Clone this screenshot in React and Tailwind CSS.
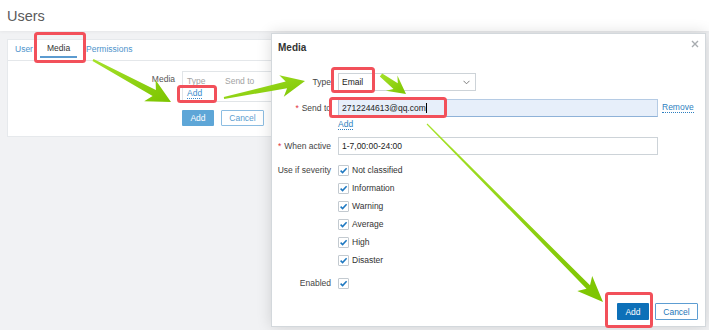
import React from 'react'

const font = "font-['Liberation_Sans',Arial,sans-serif]"

// tapered arrow polygon from tail to tip
function arrow(x1, y1, x2, y2, w0, w1, hl, hw) {
  const dx = x2 - x1
  const dy = y2 - y1
  const len = Math.hypot(dx, dy)
  const ux = dx / len
  const uy = dy / len
  const px = -uy
  const py = ux
  const bx = x2 - ux * hl
  const by = y2 - uy * hl
  const sx = bx + ux * 3
  const sy = by + uy * 3
  const pts = [
    [x1 + (px * w0) / 2, y1 + (py * w0) / 2],
    [sx + (px * w1) / 2, sy + (py * w1) / 2],
    [bx - ux * 2 + (px * hw) / 2, by - uy * 2 + (py * hw) / 2],
    [x2, y2],
    [bx - ux * 2 - (px * hw) / 2, by - uy * 2 - (py * hw) / 2],
    [sx - (px * w1) / 2, sy - (py * w1) / 2],
    [x1 - (px * w0) / 2, y1 - (py * w0) / 2],
  ]
  return pts.map(p => p.map(v => v.toFixed(1)).join(',')).join(' ')
}

const redBoxes = [
  [34, 32, 86, 63],
  [177, 85, 217, 103],
  [331, 67, 375, 93],
  [329, 97, 447, 118],
  [605, 292, 653, 328],
]

const arrows = [
  [93, 60, 171, 102, 2, 7, 22, 24],
  [224, 98, 305, 81, 2, 7, 22, 22],
  [381, 75, 406, 94, 4, 7, 16, 19],
  [427, 124, 603, 302, 1, 5, 24, 21],
]

function Annotations() {
  return (
    <svg className="absolute inset-0 pointer-events-none" width="709" height="330">
      <defs>
        <linearGradient id="lime" x1="0" y1="0" x2="1" y2="1">
          <stop offset="0" stopColor="#a6e22a" />
          <stop offset="1" stopColor="#7cc400" />
        </linearGradient>
      </defs>
      {redBoxes.map(([a, b, c, d], i) => (
        <rect key={i} x={a + 1.5} y={b + 1.5} width={c - a - 3} height={d - b - 3} rx="2" fill="none" stroke="#f2505a" strokeWidth="3" />
      ))}
      {arrows.map((a, i) => (
        <polygon key={i} points={arrow(...a)} fill="url(#lime)" />
      ))}
    </svg>
  )
}

function Check() {
  return (
    <span className="w-[11px] h-[11px] border border-[#c3cad0] rounded-[1px] bg-white flex items-center justify-center shrink-0">
      <svg width="9" height="9" viewBox="0 0 9 9">
        <path d="M1.6 4.6 L3.6 6.6 L7.6 2.2" fill="none" stroke="#1d78c1" strokeWidth="1.5" />
      </svg>
    </span>
  )
}

function Row({ label, req, className = '', children }) {
  return (
    <div className={`flex gap-[7px] ${className}`}>
      <div className="w-[53px] h-[18px] flex items-center justify-end whitespace-nowrap text-[#444]">
        {req && <span className="text-[#e2343c] mr-[3px]">*</span>}
        {label}
      </div>
      <div className="flex-1">{children}</div>
    </div>
  )
}

const severities = ['Not classified', 'Information', 'Warning', 'Average', 'High', 'Disaster']

export default function App() {
  return (
    <div className={`relative w-[709px] h-[330px] overflow-hidden bg-[#f1f2f4] ${font} text-[8.5px] leading-[10px]`}>
      {/* Page header */}
      <div className="h-[31px] bg-white flex items-center px-[7px] shadow-[0_1px_3px_rgba(0,0,0,0.05)]">
        <span className="text-[14.5px] leading-[16px] text-[#5b5b5b]">Users</span>
      </div>

      {/* User form card behind the dialog */}
      <div className="mx-[7px] mt-[8px] h-[98px] bg-white border border-[#e6e9ec]">
        <div className="h-[21px] border-b border-[#e4e7ea] flex items-start text-[8.5px]">
          <span className="px-[7px] h-[18px] flex items-center text-[#4d93cb]">User</span>
          <span className="px-[7px] h-[18px] flex items-center text-[#333] border-b-2 border-[#5b9bd0]">Media</span>
          <span className="ml-[2px] px-[7px] h-[18px] flex items-center text-[#4d93cb]">Permissions</span>
        </div>
        <div className="flex gap-[7px] mt-[10px]">
          <div className="w-[167px] text-right text-[#555] pt-[3px]">Media</div>
          <div className="w-[320px] h-[31px] border border-[#e1e5e8] px-[4px] pt-[4px]">
            <div className="flex text-[#a3a3a3]">
              <span className="w-[38px]">Type</span>
              <span>Send to</span>
            </div>
            <span className="inline-block mt-[3px] text-[#3a8bcb] border-b border-dotted border-[#3a8bcb] leading-[9px]">Add</span>
          </div>
        </div>
        <div className="flex gap-[7px] ml-[174px] mt-[8px]">
          <span className="w-[32px] h-[16px] bg-[#5ea6d7] text-white flex items-center justify-center rounded-[1px]">Add</span>
          <span className="w-[43px] h-[16px] border border-[#8cbde2] text-[#5c9dcf] bg-white flex items-center justify-center rounded-[1px]">Cancel</span>
        </div>
      </div>

      {/* Media dialog */}
      <div className="absolute left-[271px] top-[33px] w-[435px] h-[294px] bg-white border border-[#d3d8dc] shadow-[0_0_14px_rgba(0,0,0,0.14)] flex flex-col">
        <div className="pt-[8px] pl-[6px] h-[20px] text-[10px] leading-[12px] font-bold text-[#333]">Media</div>
        <svg className="absolute right-[6px] top-[6px]" width="8" height="8" viewBox="0 0 8 8">
          <path d="M1 1 L7 7 M7 1 L1 7" stroke="#a8acb0" strokeWidth="1.4" />
        </svg>

        <div className="px-[6px] mt-[19px]">
          <Row label="Type">
            <div className="w-[138px] h-[18px] border border-[#cdd3d8] flex items-center justify-between pl-[3px] pr-[5px] text-[#222]">
              <span>Email</span>
              <svg width="7" height="5" viewBox="0 0 7 5">
                <path d="M0.5 0.8 L3.5 3.8 L6.5 0.8" fill="none" stroke="#6f6f6f" strokeWidth="0.9" />
              </svg>
            </div>
          </Row>

          <Row label="Send to" req className="mt-[8px]">
            <div className="flex items-center">
              <div className="w-[320px] h-[18px] bg-[#e7effa] border border-[#b5cbe4] border-b-[#8fb2d8] flex items-center pl-[3px] text-[#1d1d1d]">
                <span>2712244613@qq.com</span>
                <span className="w-[1px] h-[10px] bg-black" />
              </div>
              <span className="ml-[4px] text-[#2d7fc0] border-b border-dotted border-[#2d7fc0] leading-[9px]">Remove</span>
            </div>
          </Row>

          <div className="flex gap-[7px] h-[16px] items-center">
            <div className="w-[53px]" />
            <span className="text-[#2d7fc0] border-b border-dotted border-[#2d7fc0] leading-[9px]">Add</span>
          </div>

          <Row label="When active" req className="mt-[4px]">
            <div className="w-[320px] h-[18px] border border-[#cdd3d8] flex items-center pl-[3px] text-[#222]">1-7,00:00-24:00</div>
          </Row>

          <Row label="Use if severity" className="mt-[6px]">
            <div className="flex flex-col">
              {severities.map(s => (
                <div key={s} className="h-[18px] flex items-center gap-[3px] text-[#333]">
                  <Check />
                  <span>{s}</span>
                </div>
              ))}
            </div>
          </Row>

          <Row label="Enabled" className="mt-[5px]">
            <div className="h-[18px] flex items-center">
              <Check />
            </div>
          </Row>
        </div>

        <div className="mt-auto flex justify-end gap-[6px] pr-[7px] pb-[6px]">
          <span className="w-[32px] h-[17px] bg-[#0d70b8] text-white flex items-center justify-center rounded-[1px]">Add</span>
          <span className="w-[43px] h-[17px] border border-[#5d9dd2] text-[#2576b8] bg-white flex items-center justify-center rounded-[1px]">Cancel</span>
        </div>
      </div>

      <Annotations />
    </div>
  )
}
